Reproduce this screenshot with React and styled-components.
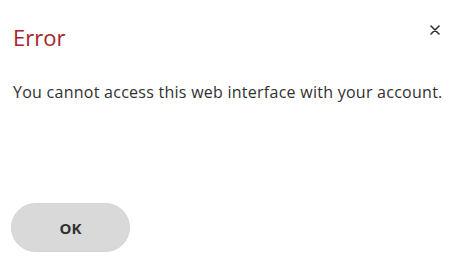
import React from 'react'
import styled, { createGlobalStyle } from 'styled-components'

const Global = createGlobalStyle`
  body {
    margin: 0;
    background: #ffffff;
    font-family: "Open Sans", "Noto Sans", sans-serif;
  }
`

const Dialog = styled.div`
  width: 454px;
  height: 256px;
  box-sizing: border-box;
  padding: 21px 11px 4px 13px;
  display: flex;
  flex-direction: column;
`

const Header = styled.div`
  display: flex;
  justify-content: space-between;
  align-items: flex-start;
`

const Title = styled.h1`
  margin: 0;
  font-size: 22px;
  font-weight: 400;
  line-height: 32px;
  color: #a4262c;
`

const Close = styled.button`
  border: 0;
  background: none;
  padding: 0;
  margin: 1px 0 0 0;
  width: 16px;
  height: 16px;
  display: flex;
  align-items: center;
  justify-content: center;
  cursor: pointer;
`

const Message = styled.p`
  margin: 29px 0 0 0;
  font-size: 16px;
  line-height: 20px;
  color: #323130;
  letter-spacing: 0.26px;
`

const Footer = styled.div`
  margin-top: auto;
  display: flex;
`

const Button = styled.button`
  width: 119px;
  height: 49px;
  margin-left: -2px;
  border: 1px solid #d4d4d4;
  border-radius: 25px;
  background: #d9d9d9;
  color: #323130;
  font-family: "Open Sans", "Noto Sans", sans-serif;
  font-size: 15px;
  font-weight: 700;
  cursor: pointer;
`

export default function App() {
  return (
    <>
      <Global />
      <Dialog>
        <Header>
          <Title>Error</Title>
          <Close aria-label="Close">
            <svg width="10" height="10" viewBox="0 0 10 10">
              <path d="M1 1 L9 9 M9 1 L1 9" stroke="#323130" strokeWidth="1.6" strokeLinecap="round" />
            </svg>
          </Close>
        </Header>
        <Message>You cannot access this web interface with your account.</Message>
        <Footer>
          <Button>OK</Button>
        </Footer>
      </Dialog>
    </>
  )
}
